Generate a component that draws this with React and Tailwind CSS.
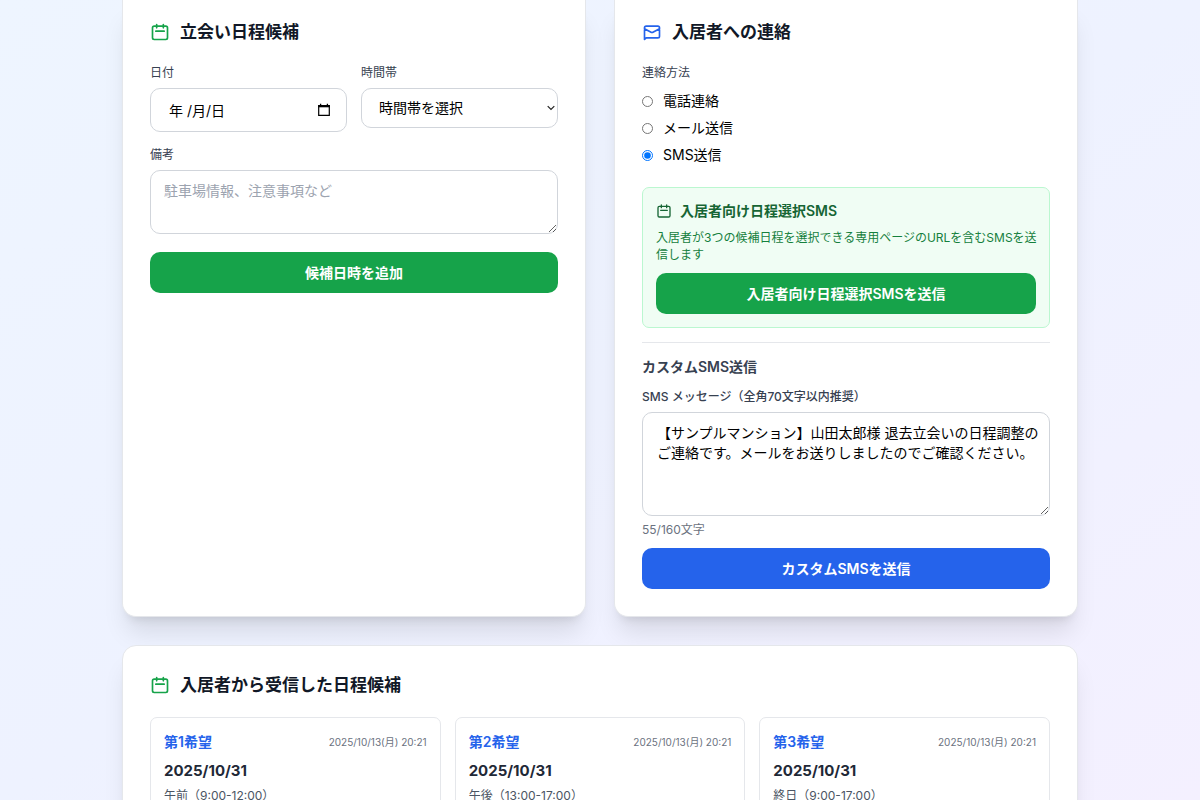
import React, { useState } from "react";

function CalendarIcon({ className }) {
  return (
    <svg className={className} viewBox="0 0 24 24" fill="none" stroke="currentColor" strokeWidth="2" strokeLinecap="round" strokeLinejoin="round" aria-hidden="true">
      <path d="M8 7V3m8 4V3m-9 8h10M5 21h14a2 2 0 002-2V7a2 2 0 00-2-2H5a2 2 0 00-2 2v12a2 2 0 002 2z" />
    </svg>
  );
}

function MailIcon({ className }) {
  return (
    <svg className={className} viewBox="0 0 24 24" fill="none" stroke="currentColor" strokeWidth="2" strokeLinecap="round" strokeLinejoin="round" aria-hidden="true">
      <path d="M3 8l7.89 4.26a2 2 0 002.22 0L21 8M5 19h14a2 2 0 002-2V7a2 2 0 00-2-2H5a2 2 0 00-2 2v14l2-2z" />
    </svg>
  );
}

function DatePickerIcon() {
  return (
    <svg className="size-3.5" viewBox="0 0 14 14" fill="none" stroke="currentColor" aria-hidden="true">
      <path d="M1.7 2.7h10.6v9.6H1.7z" strokeWidth="1.2" />
      <path d="M1.2 3.2h11.6" strokeWidth="2.2" />
      <path d="M3.6 0.8v2M10.4 0.8v2" strokeWidth="1.3" />
    </svg>
  );
}

function Heading({ icon, children }) {
  return (
    <h2 className="mb-5 flex items-center gap-2.5 text-[17px] leading-6 font-semibold text-[#111827]">
      {icon}
      {children}
    </h2>
  );
}

const card = "border border-[#e5e7eb] bg-white p-[27px] shadow-xl";
const label = "block text-xs leading-[17px] text-[#374151]";
const field = "w-full rounded-[10px] border border-[#d1d5db] bg-white text-sm leading-5 text-black";
const button = "block h-[41px] w-full rounded-[10px] text-sm leading-5 font-semibold text-white";

const methods = [
  { value: "phone", text: "電話連絡" },
  { value: "mail", text: "メール送信" },
  { value: "sms", text: "SMS送信" },
];

const candidates = [
  { rank: "第1希望", date: "2025/10/31", slot: "午前（9:00-12:00）" },
  { rank: "第2希望", date: "2025/10/31", slot: "午後（13:00-17:00）" },
  { rank: "第3希望", date: "2025/10/31", slot: "終日（9:00-17:00）" },
];

function ScheduleCard() {
  return (
    <section className={`${card} rounded-b-[14px] border-t-0 pt-5`}>
      <Heading icon={<CalendarIcon className="size-5 text-[#16a34a]" />}>立会い日程候補</Heading>
      <div className="grid grid-cols-2 items-start gap-3.5">
        <div>
          <label htmlFor="date" className={label}>日付</label>
          <div className="relative mt-[7px]">
            <input id="date" type="text" placeholder="年 /月/日" className={`${field} h-11 pl-[18px] pr-10 placeholder:text-black`} />
            <button type="button" aria-label="カレンダーを開く" className="absolute inset-y-0 right-4 flex items-center text-black">
              <DatePickerIcon />
            </button>
          </div>
        </div>
        <div>
          <label htmlFor="slot" className={label}>時間帯</label>
          <div className="relative mt-[7px]">
            <select id="slot" className={`${field} h-10 appearance-none px-[17px]`}>
              <option>時間帯を選択</option>
              <option>午前（9:00-12:00）</option>
              <option>午後（13:00-17:00）</option>
              <option>終日（9:00-17:00）</option>
            </select>
            <svg className="pointer-events-none absolute top-4 right-[3px] h-2 w-2" viewBox="0 0 8 8" fill="none" stroke="#222" strokeWidth="1.2" aria-hidden="true">
              <path d="M0.7 2.2L4 5.5l3.3-3.3" />
            </svg>
          </div>
        </div>
      </div>
      <label htmlFor="note" className={`${label} mt-3.5`}>備考</label>
      <textarea id="note" placeholder="駐車場情報、注意事項など" className={`${field} mt-[7px] block h-16 px-[13px] py-2.5 placeholder:text-[#9ca3af]`} />
      <button type="button" className={`${button} mt-[18px] bg-[#16a34a]`}>候補日時を追加</button>
    </section>
  );
}

function ContactCard() {
  const [method, setMethod] = useState("sms");
  return (
    <section className={`${card} rounded-b-[14px] border-t-0 pt-5`}>
      <Heading icon={<MailIcon className="size-5 text-[#2563eb]" />}>入居者への連絡</Heading>
      <fieldset>
        <legend className={label}>連絡方法</legend>
        <div className="mt-2.5 flex flex-col gap-[7px]">
          {methods.map((m) => (
            <label key={m.value} className="flex items-center gap-2.5 text-sm leading-5 text-black">
              <input type="radio" name="method" checked={method === m.value} onChange={() => setMethod(m.value)} className="size-[11px] accent-[#0075ff]" />
              {m.text}
            </label>
          ))}
        </div>
      </fieldset>
      <div className="mt-[22px] rounded-[7px] border border-[#bbf7d0] bg-[#f0fdf4] p-[13px]">
        <h3 className="flex items-center gap-2 text-sm leading-5 font-semibold text-[#166534]">
          <CalendarIcon className="size-4" />
          入居者向け日程選択SMS
        </h3>
        <p className="mt-2 -mr-2 text-xs leading-[17px] text-[#15803d]">
          入居者が3つの候補日程を選択できる専用ページのURLを含むSMSを送信します
        </p>
        <button type="button" className={`${button} mt-2.5 bg-[#16a34a]`}>入居者向け日程選択SMSを送信</button>
      </div>
      <div className="mt-3.5 border-t border-[#e5e7eb] pt-3.5">
        <h3 className="text-sm leading-5 font-semibold text-[#374151]">カスタムSMS送信</h3>
        <label htmlFor="message" className={`${label} mt-[11px] font-medium`}>SMS メッセージ（全角70文字以内推奨）</label>
        <textarea
          id="message"
          defaultValue="【サンプルマンション】山田太郎様 退去立会いの日程調整のご連絡です。メールをお送りしましたのでご確認ください。"
          className={`${field} mt-[7px] block h-[104px] py-2.5 pr-1.5 pl-3.5`}
        />
        <p className="mt-[5px] text-xs leading-[17px] text-[#6b7280]">55/160文字</p>
        <button type="button" className={`${button} mt-2.5 bg-[#2563eb]`}>カスタムSMSを送信</button>
      </div>
    </section>
  );
}

export default function App() {
  return (
    <main className="h-screen overflow-hidden bg-linear-to-br from-[#eef5ff] via-[#eef2ff] to-[#f4f0ff] px-6 font-['Inter','Noto_Sans_CJK_JP',sans-serif]">
      <div className="mx-auto flex max-w-[956px] flex-col gap-7">
        <div className="grid grid-cols-2 gap-7">
          <ScheduleCard />
          <ContactCard />
        </div>
        <section className={`${card} rounded-[14px]`}>
          <Heading icon={<CalendarIcon className="size-5 text-[#16a34a]" />}>入居者から受信した日程候補</Heading>
          <div className="grid grid-cols-3 gap-3.5">
            {candidates.map((c) => (
              <article key={c.rank} className="rounded-[7px] border border-[#e5e7eb] px-[13px] py-3.5">
                <div className="flex items-center justify-between">
                  <h3 className="text-sm leading-5 font-semibold text-[#2563eb]">{c.rank}</h3>
                  <time className="text-[10px] leading-4 text-[#6b7280]">2025/10/13(月) 20:21</time>
                </div>
                <p className="mt-[7px] text-[15px] leading-6 font-bold text-[#1f2937]">{c.date}</p>
                <p className="mt-1 text-xs leading-[17px] text-[#4b5563]">{c.slot}</p>
              </article>
            ))}
          </div>
        </section>
      </div>
    </main>
  );
}
